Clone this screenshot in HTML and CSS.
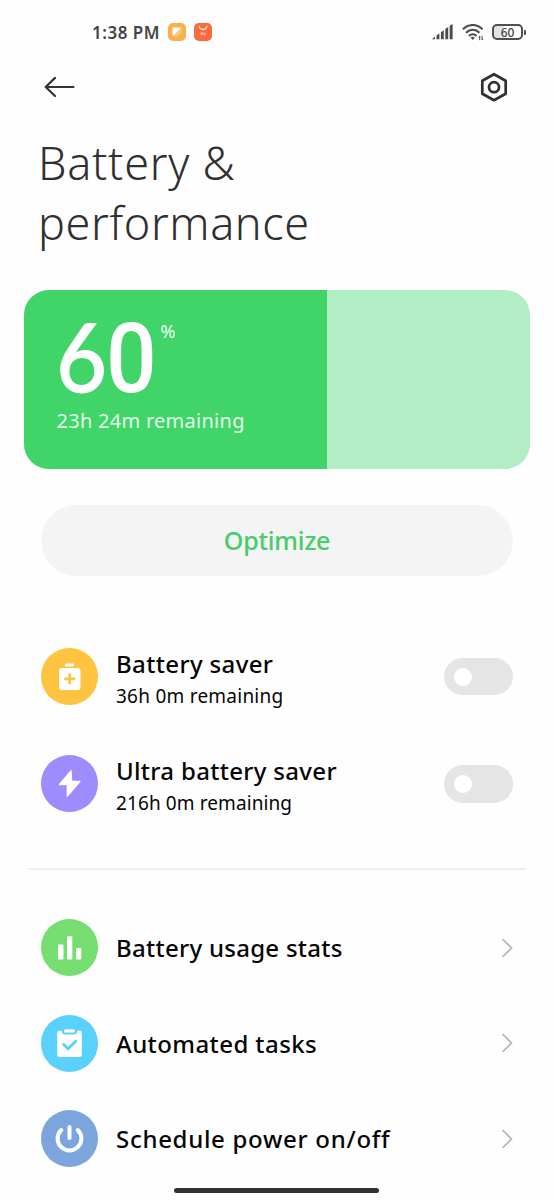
FILE: index.html
```html
<!DOCTYPE html>
<html lang="en">
<head>
<meta charset="utf-8">
<title>Battery &amp; performance</title>
<link rel="stylesheet" href="styles.css">
</head>
<body>
<div class="screen">
  <header class="status">
    <span class="time">1:38 PM</span>
    <svg class="app" width="18" height="18" viewBox="0 0 18 18"><rect width="18" height="18" rx="5" fill="#f9b04c"/><path d="M4.500 4.500h9L4.500 13.500z" fill="#fff"/><path d="M13.500 4.500v5l-4 4h-5z" fill="#fff" opacity=".3"/></svg>
    <svg class="app" width="18" height="18" viewBox="0 0 18 18"><rect width="18" height="18" rx="5" fill="#f96c40"/><path d="M5 2.600c.3 5 7.700 5 8 0" fill="none" stroke="#fff" stroke-opacity=".8" stroke-width="1.100"/><path d="M7 12.200V9.800h1.900v2.400M10.800 9.600v2.800" fill="none" stroke="#fff" stroke-opacity=".75" stroke-width=".8"/></svg>
    <span class="spacer"></span>
    <svg width="22" height="17" viewBox="0 0 22 17" fill="#4a4a4a"><path d="M0 15.200L2.900 12.500v2.700zM4.500 11.500l2.900-2v5.700H4.500zM8.900 8.200l2.900-2v9H8.900zM13.300 5l2.900-2v12.200h-2.900zM17.700 1.800L20.600 0v15.200h-2.900z"/></svg>
    <svg class="wifi" width="23" height="17" viewBox="0 0 23 17" fill="none" stroke="#4a4a4a" stroke-width="2"><path d="M.9 5.300C7-.5 14.500-.5 20.600 5.300M4 8.700c4-3.900 9.500-3.900 13.500 0M7 12c2.200-2.200 5.400-2.200 7.500 0"/><path d="M8.600 13.600c1.300-1.100 3-1.100 4.300 0l-2.200 2.300z" fill="#4a4a4a" stroke="none"/><path d="M17.700 12.200v4M20 11.800v4M16.600 13.300l1-1.100M21.100 14.900l-1 1.100" stroke-width="1"/></svg>
    <span class="cell"><span>60</span></span><span class="cap"></span>
  </header>
  <nav class="bar">
    <svg width="32" height="22" viewBox="0 0 32 22" fill="none" stroke="#333" stroke-width="2.200" stroke-linecap="round" stroke-linejoin="round"><path d="M1.700 11H29.500M11 1.900L1.700 11l9.300 9"/></svg>
    <svg width="28" height="30" viewBox="0 0 28 30" fill="none" stroke="#303030" stroke-width="2.700" stroke-linejoin="round"><path d="M14 2.200L25.700 8.700v13L14 28.200 2.300 21.700v-13z"/><circle cx="14" cy="15.200" r="5"/></svg>
  </nav>
  <h1 class="title"><span class="t1">Battery &amp;</span><br><span class="t2">performance</span></h1>
  <section class="card">
    <div class="level" style="width:60%">
      <div class="percent"><span class="six">6</span><span class="zero">0</span><span class="sign">%</span></div>
      <div class="left">23h 24m remaining</div>
    </div>
  </section>
  <button class="optimize"><span>Optimize</span></button>
  <section class="modes">
    <div class="row">
      <svg class="icon" viewBox="0 0 57 57"><circle cx="28.500" cy="28.500" r="28.500" fill="#fec440"/><rect x="24" y="15.500" width="9" height="3" rx="1.300" fill="#fff"/><rect x="18" y="20" width="21.500" height="22" rx="3" fill="#fff"/><path d="M28.700 25.300v11M23.200 30.800h11" stroke="#fec440" stroke-width="2.700"/></svg>
      <div class="text"><span class="label l1">Battery saver</span><span class="sub s1">36h 0m remaining</span></div>
      <span class="toggle"></span>
    </div>
    <div class="row">
      <svg class="icon" viewBox="0 0 57 57"><circle cx="28.500" cy="28.500" r="28.500" fill="#9c8cfd"/><path d="M30 16L18.500 29.500h8L26.300 41 38.800 26.500H30.500z" fill="#fff" stroke="#fff" stroke-width="1.500" stroke-linejoin="round"/></svg>
      <div class="text"><span class="label l2">Ultra battery saver</span><span class="sub s2">216h 0m remaining</span></div>
      <span class="toggle"></span>
    </div>
  </section>
  <hr class="rule">
  <section class="links">
    <div class="row">
      <svg class="icon" viewBox="0 0 57 57"><circle cx="28.500" cy="28.500" r="28.500" fill="#76de70"/><g fill="#fff"><rect x="17" y="25.500" width="5.500" height="15" rx="1"/><rect x="26" y="17.300" width="5.300" height="23.200" rx="1"/><rect x="35" y="29" width="5.300" height="11.500" rx="1"/></g></svg>
      <span class="label l3">Battery usage stats</span>
      <svg class="chev" viewBox="0 0 12 20"><path d="M1.500 1l9 9-9 9"/></svg>
    </div>
    <div class="row">
      <svg class="icon" viewBox="0 0 57 57"><circle cx="28.500" cy="28.500" r="28.500" fill="#5ad1fd"/><path d="M18.700 15.500h1.800c.7 3.300 1.700 4 3.500 4h9c1.800 0 2.800-.7 3.500-4h1.800q2.500 0 2.500 2.500v21.500q0 2.500-2.500 2.500H18.700q-2.500 0-2.500-2.500V18q0-2.500 2.500-2.500z" fill="#fff"/><rect x="23" y="14.300" width="11" height="3.300" rx="1.600" fill="#fff"/><path d="M22.800 29.500l4.300 4.300 7.600-7.500" fill="none" stroke="#5ad1fd" stroke-width="3" stroke-linecap="round" stroke-linejoin="round"/></svg>
      <span class="label l4">Automated tasks</span>
      <svg class="chev" viewBox="0 0 12 20"><path d="M1.500 1l9 9-9 9"/></svg>
    </div>
    <div class="row">
      <svg class="icon" viewBox="0 0 57 57"><circle cx="28.500" cy="28.500" r="28.500" fill="#7da5dd"/><path d="M28.500 17v11M20.300 20a11.900 11.900 0 1 0 16.400 0" fill="none" stroke="#fff" stroke-width="4" stroke-linecap="round"/></svg>
      <span class="label l5">Schedule power on/off</span>
      <svg class="chev" viewBox="0 0 12 20"><path d="M1.500 1l9 9-9 9"/></svg>
    </div>
  </section>
  <div class="home"></div>
</div>
</body>
</html>
```
FILE: styles.css
```css
* { box-sizing: border-box; }
body { margin: 0; background: #fefefe; font-family: "Noto Sans", "Liberation Sans", sans-serif; color: #060606; }
.screen { width: 554px; height: 1200px; overflow: hidden; display: flex; flex-direction: column; }
.status { height: 64px; padding: 0 28px 0 92px; display: flex; align-items: center; flex: none; }
.time { font-size: 17px; font-weight: 600; letter-spacing: .5px; color: #444; white-space: nowrap; width: 76px; }
.app { margin-right: 8px; }
.spacer { flex: 1; }
.wifi { margin: 0 7px 0 8px; }
.cell { width: 31px; height: 16px; border: 2px solid #505050; border-radius: 5px; display: flex; align-items: center; justify-content: center; font-size: 12px; line-height: 12px; font-weight: 500; color: #444; background: linear-gradient(90deg, #e4e4e4 36%, transparent 36%); }
.cell span { padding-top: 1px; }
.cap { width: 2px; height: 5px; margin-left: 1px; background: #555; border-radius: 0 1px 1px 0; }
.bar { height: 46px; padding: 0 46px 0 44px; display: flex; align-items: center; justify-content: space-between; flex: none; }
.title { margin: 23px 0 0 38px; height: 121px; font-size: 45px; line-height: 60px; font-weight: 300; color: #303030; white-space: nowrap; flex: none; }
.t1 { letter-spacing: .75px; }
.t2 { letter-spacing: .6px; }
.card { margin: 35.500px 24px 0 23.500px; height: 179px; border-radius: 25px; overflow: hidden; background: #b2eec5; flex: none; }
.level { height: 100%; background: #41d469; padding: 20px 0 0 33px; color: #fff; }
.percent { height: 95px; display: flex; align-items: flex-start; line-height: 96px; }
.six, .zero { font-size: 96px; font-weight: 500; width: 49px; }
.six { font-family: Lato, sans-serif; font-weight: 600; line-height: 92px; margin-left: -1px; margin-right: 1px; transform: scaleX(.92); transform-origin: left; }
.zero { font-family: Roboto, sans-serif; line-height: 99px; transform: scaleX(.93); transform-origin: left; }
.sign { font-size: 18px; line-height: 24px; margin: 9px 0 0 6px; opacity: .9; }
.left { font-size: 20px; line-height: 32px; letter-spacing: .27px; color: #e4faeb; white-space: nowrap; }
.optimize { margin: 36px 41px 0; height: 71.500px; border: 0; border-radius: 36px; background: #f4f4f4; color: #47cb6b; font: 500 25px "Noto Sans", sans-serif; letter-spacing: -.2px; flex: none; }
.modes { margin-top: 46.500px; padding: 0 41px; }
.row { display: flex; align-items: center; }
.modes .row { height: 107.500px; }
.icon { width: 57px; height: 57px; flex: none; margin-right: 18px; }
.text { display: flex; flex-direction: column; flex: 1; padding-top: 6px; }
.label { font-size: 24px; line-height: 34px; font-weight: 500; white-space: nowrap; }
.l1 { letter-spacing: .36px; }
.l2 { letter-spacing: .32px; }
.l3 { letter-spacing: .28px; }
.l4 { letter-spacing: .42px; }
.l5 { letter-spacing: .7px; }
.sub { font-size: 19px; line-height: 31px; white-space: nowrap; }
.s1 { letter-spacing: .24px; }
.s2 { letter-spacing: .1px; }
.toggle { width: 69px; height: 37.500px; border-radius: 19px; background: #e5e5e5; padding: 10px; }
.toggle::before { content: ""; display: block; width: 18px; height: 18px; border-radius: 50%; background: #fff; }
.rule { width: 498px; height: 2px; margin: 30px 0 0 28px; border: 0; background: #eee; flex: none; }
.links { margin-top: 30.500px; padding: 0 41px; }
.links .row { height: 95.500px; }
.links .label { flex: 1; padding-top: 1px; }
.chev { width: 12px; height: 20px; fill: none; stroke: #b5b5b5; stroke-width: 1.700; }
.home { position: absolute; left: 174px; top: 1188px; width: 205px; height: 5px; border-radius: 3px; background: #333; }
```
